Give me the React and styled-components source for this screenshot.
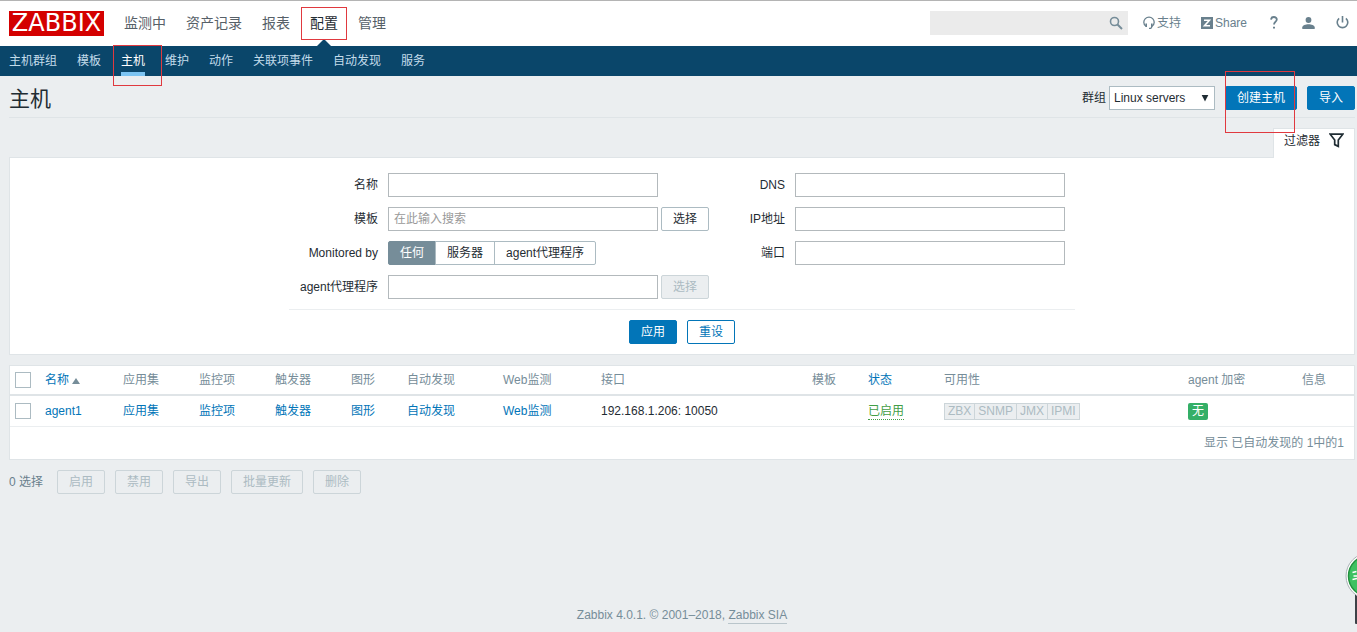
import React from "react";
import styled, { createGlobalStyle } from "styled-components";

const BLUE = "#0275b8";
const LINE = "#dfe4e7";

const GlobalStyle = createGlobalStyle`
  *, *::before, *::after { box-sizing: border-box; }
  body {
    margin: 0;
    background: #ebeef0;
    color: #1f2c33;
    font: 12px/18px "Liberation Sans", "Noto Sans CJK SC", sans-serif;
  }
  button, input, select { font: inherit; color: inherit; margin: 0; }
  a { color: inherit; text-decoration: none; }
  fieldset { border: 0; margin: 0; padding: 0; min-width: 0; }
`;

const Page = styled.div`
  min-height: 100vh;
  display: flex;
  flex-direction: column;
  overflow-x: hidden;
`;

const Header = styled.header`
  height: 46px;
  padding: 0 8px 0 9px;
  border-top: 1px solid #b4b4b4;
  background: #fff;
  display: flex;
  align-items: center;
`;

const Logo = styled.a`
  width: 95px;
  height: 25px;
  margin-right: 20px;
  background: #d40000;
  color: #fff;
  font: 24px/25px "DejaVu Sans", sans-serif;
  text-align: center;
`;

const MainNav = styled.nav`
  display: flex;
  gap: 20px;
  font-size: 14px;
`;

const MainLink = styled.a`
  position: relative;
  line-height: 44px;
  height: 46px;
  color: ${(p) => (p.$active ? "#1f2c33" : "#566068")};
  &::after {
    content: "";
    display: ${(p) => (p.$active ? "block" : "none")};
    position: absolute;
    left: 6px;
    bottom: 0;
    border: solid transparent;
    border-width: 0 8px 8px;
    border-bottom-color: #0a466a;
  }
`;

const Mark = styled.span`
  position: absolute;
  inset: ${(p) => p.$inset};
  border: 1px solid #e0393f;
  pointer-events: none;
  z-index: 2;
`;

const Tools = styled.div`
  margin-left: auto;
  padding-bottom: 2px;
  display: flex;
  align-items: center;
  color: #69808d;
`;

const Search = styled.form`
  width: 198px;
  height: 24px;
  margin-right: 15px;
  background: #ebebeb;
  display: flex;
`;

const SearchInput = styled.input`
  flex: 1;
  min-width: 0;
  border: 0;
  background: transparent;
  padding: 0 5px;
`;

const IconButton = styled.button`
  width: 24px;
  border: 0;
  padding: 0;
  background: transparent;
  color: #768d99;
  display: grid;
  place-items: center;
`;

const Tool = styled.a`
  display: flex;
  align-items: center;
  gap: 2px;
  margin-right: ${(p) => p.$gap || 0}px;
`;

const SubNav = styled.nav`
  height: 30px;
  padding: 0 9px;
  display: flex;
  gap: 20px;
  background: #0a466a;
`;

const SubLink = styled.a`
  position: relative;
  height: 30px;
  line-height: 30px;
  color: ${(p) => (p.$active ? "#fff" : "#c3dcea")};
  border-bottom: 4px solid ${(p) => (p.$active ? "#7cc4f2" : "transparent")};
`;

const Content = styled.main`
  padding: 0 2px 0 9px;
`;

const TitleBar = styled.div`
  height: 42px;
  padding-top: 2px;
  display: flex;
  align-items: center;
  border-bottom: 1px solid ${LINE};
`;

const Title = styled.h1`
  margin: 0 auto 0 0;
  padding-top: 2px;
  font-size: 21px;
  line-height: 30px;
  font-weight: 400;
`;

const SelectBox = styled.span`
  display: grid;
  align-items: center;
  margin: 0 10px 0 3px;
  & > * { grid-area: 1 / 1; }
  svg { justify-self: end; margin-right: 6px; pointer-events: none; }
`;

const Select = styled.select`
  appearance: none;
  width: 106px;
  height: 24px;
  padding: 0 4px;
  border: 1px solid #acbbc2;
  border-radius: 0;
  background: #fff;
`;

const Button = styled.button`
  height: 24px;
  padding: 0 11px;
  line-height: 22px;
  border: 1px solid ${BLUE};
  border-radius: 2px;
  background: ${BLUE};
  color: #fff;
  white-space: nowrap;
`;

const OutlineButton = styled(Button)`
  background: #fff;
  color: ${BLUE};
`;

const PlainButton = styled(Button)`
  background: #fff;
  border-color: #acbbc2;
  color: #1f2c33;
  &:disabled {
    background: #ebeef0;
    border-color: #ccd5d9;
    color: #acbbc2;
  }
`;

const CreateWrap = styled.span`
  position: relative;
  margin-right: 10px;
`;

const FilterTabs = styled.div`
  display: flex;
  justify-content: flex-end;
  padding-top: 10px;
`;

const FilterTab = styled.a`
  height: 30px;
  width: 82px;
  margin-bottom: -1px;
  padding: 2px 10px 8px;
  display: flex;
  align-items: center;
  gap: 9px;
  background: #fff;
  border: 1px solid ${LINE};
  border-bottom: 0;
  position: relative;
`;

const Panel = styled.section`
  background: #fff;
  border: 1px solid ${LINE};
`;

const FilterForm = styled.form`
  max-width: 786px;
  margin: 0 auto;
  padding: 15px 0 10px;
`;

const Columns = styled.div`
  display: flex;
  justify-content: space-between;
  padding: 0 10px 10px 0;
  border-bottom: 1px solid #ebeef0;
`;

const Column = styled.div`
  display: flex;
  flex-direction: column;
  gap: 10px;
`;

const Field = styled.div`
  display: flex;
  align-items: center;
  gap: 3px;
  height: 24px;
`;

const Label = styled.label`
  width: ${(p) => p.$width}px;
  margin-right: 7px;
  text-align: right;
  white-space: nowrap;
`;

const TextInput = styled.input`
  width: 270px;
  height: 24px;
  padding: 0 5px;
  border: 1px solid #b3b9bc;
  border-radius: 0;
  background: #fff;
  &::placeholder { color: #999; opacity: 1; }
`;

const Segments = styled.fieldset`
  display: flex;
`;

const Segment = styled.label`
  height: 24px;
  line-height: 22px;
  padding: 0 11px;
  border: 1px solid #acbbc2;
  white-space: nowrap;
  & + & { margin-left: -1px; }
  &:first-of-type { border-radius: 2px 0 0 2px; }
  &:last-of-type { border-radius: 0 2px 2px 0; }
  &:has(input:checked) { background: #768d99; border-color: #768d99; color: #fff; }
  input { appearance: none; width: 0; height: 0; margin: 0; position: absolute; }
`;

const FormButtons = styled.div`
  display: flex;
  justify-content: center;
  gap: 10px;
  padding-top: 10px;
`;

const TablePanel = styled(Panel)`
  margin-top: 10px;
`;

const Table = styled.table`
  width: 100%;
  table-layout: fixed;
  border-collapse: collapse;
`;

const Col = styled.col`
  width: ${(p) => (p.$width ? `${p.$width}px` : "auto")};
`;

const Th = styled.th`
  height: 29px;
  padding: 0 5px;
  font-weight: 400;
  text-align: left;
  white-space: nowrap;
  color: #768d99;
  border-bottom: 2px solid ${LINE};
`;

const Td = styled.td`
  height: 31px;
  padding: 0 5px;
  white-space: nowrap;
  border-bottom: 1px solid #ebeef0;
`;

const TableLink = styled.a`
  color: ${BLUE};
`;

const SortArrow = styled.span`
  display: inline-block;
  margin-left: 3px;
  border: solid transparent;
  border-width: 0 4px 6px;
  border-bottom-color: #768d99;
`;

const Check = styled.input`
  appearance: none;
  display: block;
  width: 16px;
  height: 16px;
  border: 1px solid #acbbc2;
  background: #fff;
`;

const StatusLink = styled.a`
  display: inline-block;
  line-height: 15px;
  color: #429e47;
  border-bottom: 1px dotted #429e47;
`;

const Interfaces = styled.span`
  display: inline-flex;
  vertical-align: middle;
  height: 17px;
  line-height: 15px;
  border: 1px solid #ccd5d9;
  background: #ebeef0;
  color: #acbbc2;
`;

const Interface = styled.span`
  padding: 0 3px;
  & + & { border-left: 1px solid #ccd5d9; }
`;

const Badge = styled.span`
  display: inline-block;
  vertical-align: middle;
  height: 17px;
  padding: 0 4px;
  line-height: 17px;
  border-radius: 2px;
  background: #34af67;
  color: #fff;
`;

const TableFooter = styled.div`
  height: 32px;
  line-height: 32px;
  padding-right: 10px;
  text-align: right;
  color: #768d99;
`;

const Actions = styled.div`
  display: flex;
  align-items: center;
  gap: 10px;
  padding-top: 10px;
`;

const Count = styled.span`
  margin-right: 4px;
  color: #69808d;
`;

const PageFooter = styled.footer`
  margin-top: auto;
  padding: 20px 2px 8px 9px;
  text-align: center;
  color: #768d99;
  a { display: inline-block; line-height: 15px; border-bottom: 1px solid #b9c5cb; }
`;

const Floating = styled.svg`
  position: fixed;
  right: 0;
  bottom: 4px;
  z-index: 3;
`;

const SUB = ["主机群组", "模板", "主机", "维护", "动作", "关联项事件", "自动发现", "服务"];
const MAIN = ["监测中", "资产记录", "报表", "配置", "管理"];
const WIDTHS = [30, 78, 76, 76, 76, 56, 96, 98, 0, 56, 76, 244, 114, 57];
const LINKS = ["应用集", "监控项", "触发器", "图形", "自动发现", "Web监测"];

export default function App() {
  return (
    <Page>
      <GlobalStyle />
      <Header>
        <Logo href="#">ZABBIX</Logo>
        <MainNav>
          {MAIN.map((t) => (
            <MainLink href="#" key={t} $active={t === "配置"}>
              {t}
              {t === "配置" && <Mark $inset="6px -9px 7px -9px" />}
            </MainLink>
          ))}
        </MainNav>
        <Tools>
          <Search>
            <SearchInput aria-label="搜索" />
            <IconButton type="button" aria-label="搜索">
              <svg width="14" height="14" viewBox="0 0 14 14" fill="none" stroke="currentColor">
                <circle cx="5.5" cy="5.5" r="4" strokeWidth="1.6" />
                <path d="M8.5 8.5 13 13" strokeWidth="2" />
              </svg>
            </IconButton>
          </Search>
          <Tool href="#" $gap={20}>
            <svg width="12" height="14" viewBox="0 0 12 14" fill="none" stroke="currentColor">
              <path d="M3 10.300C1.600 9.500.8 8 .8 6.300a5.200 5.200 0 0 1 10.400 0c0 1.700-.8 3.200-2.200 4" strokeWidth="1.300" />
              <path d="M3.200 7.500v3.500M8.800 7.500v3.500" strokeWidth="1.600" />
              <path d="M8.900 10.800 7.800 12.400H6" strokeWidth="1.200" />
            </svg>
            支持
          </Tool>
          <Tool href="#" $gap={23}>
            <svg width="12" height="12" viewBox="0 0 12 12">
              <path fill="#69808d" d="M0 0h12v12H0z" />
              <path fill="none" stroke="#fff" strokeWidth="1.600" d="M3 3.300h5.400L3.500 8.700H9" />
            </svg>
            Share
          </Tool>
          <Tool href="#" aria-label="帮助" $gap={24}>
            <svg width="8" height="13" viewBox="0 0 8 13" fill="none" stroke="currentColor" strokeWidth="1.800">
              <path d="M1 3.600C1.100 1.800 2.300 1 3.900 1s2.900.9 2.900 2.400C6.800 5.400 4 5.800 4 8.600" />
              <path d="M3 11.600h2" />
            </svg>
          </Tool>
          <Tool href="#" aria-label="用户" $gap={21}>
            <svg width="13" height="12" viewBox="0 0 13 12" fill="currentColor">
              <circle cx="6.500" cy="3" r="2.900" />
              <path d="M.3 12v-1.700C.3 8.300 3.700 7.200 6.500 7.200s6.200 1.100 6.200 3.100V12z" />
            </svg>
          </Tool>
          <Tool href="#" aria-label="退出">
            <svg width="13" height="13" viewBox="0 0 13 13" fill="none" stroke="currentColor" strokeWidth="1.600">
              <path d="M3.100 2.300a5.300 5.300 0 1 0 6.800 0M6.500 0v6.500" />
            </svg>
          </Tool>
        </Tools>
      </Header>
      <SubNav>
        {SUB.map((t) => (
          <SubLink href="#" key={t} $active={t === "主机"}>
            {t}
            {t === "主机" && <Mark $inset="-1px -17px -14px -8px" />}
          </SubLink>
        ))}
      </SubNav>
      <Content>
        <TitleBar>
          <Title>主机</Title>
          <label htmlFor="group">群组</label>
          <SelectBox>
            <Select id="group" defaultValue="Linux servers">
              <option>Linux servers</option>
            </Select>
            <svg width="8" height="8" viewBox="0 0 8 8"><path d="M.7 1h6.600L4 7.500z" fill="#1f2c33" /></svg>
          </SelectBox>
          <CreateWrap>
            <Button type="button">创建主机</Button>
            <Mark $inset="-15px 2px -23px 0" />
          </CreateWrap>
          <Button type="button">导入</Button>
        </TitleBar>
        <FilterTabs>
          <FilterTab href="#">
            过滤器
            <svg width="15" height="15" viewBox="0 0 15 15" fill="none" stroke="#1f2c33" strokeWidth="1.700">
              <path d="M1.200 1.200h12.600L9.300 7v6.300L5.700 11.600V7z" />
            </svg>
          </FilterTab>
        </FilterTabs>
        <Panel>
          <FilterForm>
            <Columns>
              <Column>
                <Field>
                  <Label htmlFor="name" $width={89}>名称</Label>
                  <TextInput id="name" />
                </Field>
                <Field>
                  <Label htmlFor="template" $width={89}>模板</Label>
                  <TextInput id="template" placeholder="在此输入搜索" />
                  <PlainButton type="button">选择</PlainButton>
                </Field>
                <Field>
                  <Label as="span" id="monitored" $width={89}>Monitored by</Label>
                  <Segments aria-labelledby="monitored">
                    <Segment><input type="radio" name="by" defaultChecked />任何</Segment>
                    <Segment><input type="radio" name="by" />服务器</Segment>
                    <Segment><input type="radio" name="by" />agent代理程序</Segment>
                  </Segments>
                </Field>
                <Field>
                  <Label htmlFor="proxy" $width={89}>agent代理程序</Label>
                  <TextInput id="proxy" />
                  <PlainButton type="button" disabled>选择</PlainButton>
                </Field>
              </Column>
              <Column>
                <Field>
                  <Label htmlFor="dns" $width={60}>DNS</Label>
                  <TextInput id="dns" />
                </Field>
                <Field>
                  <Label htmlFor="ip" $width={60}>IP地址</Label>
                  <TextInput id="ip" />
                </Field>
                <Field>
                  <Label htmlFor="port" $width={60}>端口</Label>
                  <TextInput id="port" />
                </Field>
              </Column>
            </Columns>
            <FormButtons>
              <Button type="button">应用</Button>
              <OutlineButton type="reset">重设</OutlineButton>
            </FormButtons>
          </FilterForm>
        </Panel>
        <TablePanel>
          <Table>
            <colgroup>
              {WIDTHS.map((w, i) => <Col key={i} $width={w} />)}
            </colgroup>
            <thead>
              <tr>
                <Th><Check type="checkbox" aria-label="全选" /></Th>
                <Th><TableLink href="#">名称<SortArrow /></TableLink></Th>
                {LINKS.map((t) => <Th key={t}>{t}</Th>)}
                <Th>接口</Th>
                <Th>模板</Th>
                <Th><TableLink href="#">状态</TableLink></Th>
                <Th>可用性</Th>
                <Th>agent 加密</Th>
                <Th>信息</Th>
              </tr>
            </thead>
            <tbody>
              <tr>
                <Td><Check type="checkbox" aria-label="agent1" /></Td>
                <Td><TableLink href="#">agent1</TableLink></Td>
                {LINKS.map((t) => <Td key={t}><TableLink href="#">{t}</TableLink></Td>)}
                <Td>192.168.1.206: 10050</Td>
                <Td />
                <Td><StatusLink href="#">已启用</StatusLink></Td>
                <Td>
                  <Interfaces>
                    {["ZBX", "SNMP", "JMX", "IPMI"].map((t) => <Interface key={t}>{t}</Interface>)}
                  </Interfaces>
                </Td>
                <Td><Badge>无</Badge></Td>
                <Td />
              </tr>
            </tbody>
          </Table>
          <TableFooter>显示 已自动发现的 1中的1</TableFooter>
        </TablePanel>
        <Actions>
          <Count>0 选择</Count>
          {["启用", "禁用", "导出", "批量更新", "删除"].map((t) => (
            <PlainButton type="button" disabled key={t}>{t}</PlainButton>
          ))}
        </Actions>
      </Content>
      <PageFooter>
        Zabbix 4.0.1. © 2001–2018, <a href="#">Zabbix SIA</a>
      </PageFooter>
      <Floating width="14" height="78" viewBox="0 0 14 78" aria-hidden="true">
        <rect x="12" y="40" width="10" height="34" rx="1" fill="#3d4248" />
        <circle cx="26" cy="26" r="23" fill="#fff" stroke="#a9b0b4" strokeWidth="1" />
        <circle cx="26" cy="26" r="20.500" fill="#3fc162" stroke="#22913f" strokeWidth="1.500" />
        <path d="M9.500 22.500 13.500 21.500M10.500 26h3.500M9.500 29.500 14 28.500" stroke="#fff" strokeWidth="1.400" fill="none" />
      </Floating>
    </Page>
  );
}
